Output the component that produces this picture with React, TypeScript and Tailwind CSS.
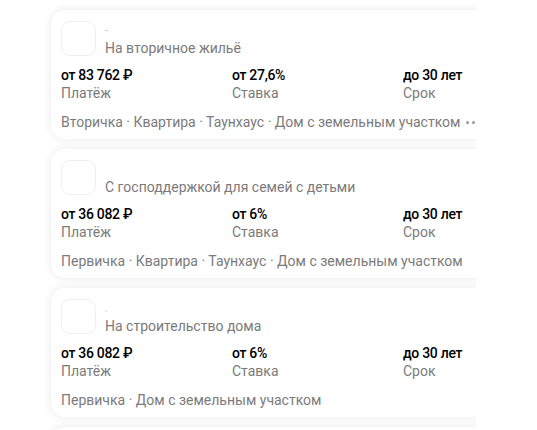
import React from "react";

type Offer = {
  bank: string;
  title: string;
  payment: string;
  rate: string;
  term: string;
  tags: string[];
  more?: boolean;
};

const OFFERS: Offer[] = [
  {
    bank: "-",
    title: "На вторичное жильё",
    payment: "от 83 762 ₽",
    rate: "от 27,6%",
    term: "до 30 лет",
    tags: ["Вторичка", "Квартира", "Таунхаус", "Дом с земельным участком"],
    more: true,
  },
  {
    bank: "",
    title: "С господдержкой для семей с детьми",
    payment: "от 36 082 ₽",
    rate: "от 6%",
    term: "до 30 лет",
    tags: ["Первичка", "Квартира", "Таунхаус", "Дом с земельным участком"],
  },
  {
    bank: ".",
    title: "На строительство дома",
    payment: "от 36 082 ₽",
    rate: "от 6%",
    term: "до 30 лет",
    tags: ["Первичка", "Дом с земельным участком"],
  },
];

function Stat({ value, label }: { value: string; label: string }) {
  return (
    <div className="flex flex-col">
      <div className="text-[14px] leading-[18px] font-medium tracking-[-0.3px] text-black">{value}</div>
      <div className="text-[14px] leading-[18px] text-[#7b7b7b]">{label}</div>
    </div>
  );
}

function OfferCard({ offer }: { offer: Offer }) {
  return (
    <div className="w-[560px] h-[129px] shrink-0 rounded-[14px] bg-white shadow-[0_0_10px_rgba(0,0,0,0.09)] px-[10px] pt-[11px]">
      <div className="flex gap-[9px]">
        <div className="w-[35px] h-[35px] shrink-0 rounded-[9px] border border-[#efefef] bg-white" />
        <div className="flex flex-col pt-[2px]">
          <div className="h-[16px] text-[10px] leading-[16px] text-[#bbb]">{offer.bank}</div>
          <div className="text-[14px] leading-[18px] text-[#7b7b7b]">{offer.title}</div>
        </div>
      </div>
      <div className="grid grid-cols-[171px_171px_171px] mt-[9px]">
        <Stat value={offer.payment} label="Платёж" />
        <Stat value={offer.rate} label="Ставка" />
        <Stat value={offer.term} label="Срок" />
      </div>
      <div className="flex items-center mt-[11px] text-[14px] leading-[18px] text-[#7b7b7b] whitespace-nowrap">
        {offer.tags.join(" · ")}
        {offer.more && (
          <span className="ml-[6px] flex gap-[3px]">
            <span className="w-[3px] h-[3px] rounded-full bg-[#9a9a9a]" />
            <span className="w-[3px] h-[3px] rounded-full bg-[#9a9a9a]" />
          </span>
        )}
      </div>
    </div>
  );
}

export default function App() {
  return (
    <div className="w-[537px] h-[430px] bg-white overflow-hidden" style={{ fontFamily: "Roboto, 'Noto Sans', sans-serif" }}>
      <div className="w-[476px] h-[430px] overflow-hidden pl-[51px] pt-[10px] flex flex-col gap-[10px]">
        {OFFERS.map((o, i) => (
          <OfferCard key={i} offer={o} />
        ))}
        <div className="w-[560px] h-[129px] shrink-0 rounded-[14px] bg-white shadow-[0_0_10px_rgba(0,0,0,0.09)]" />
      </div>
    </div>
  );
}
